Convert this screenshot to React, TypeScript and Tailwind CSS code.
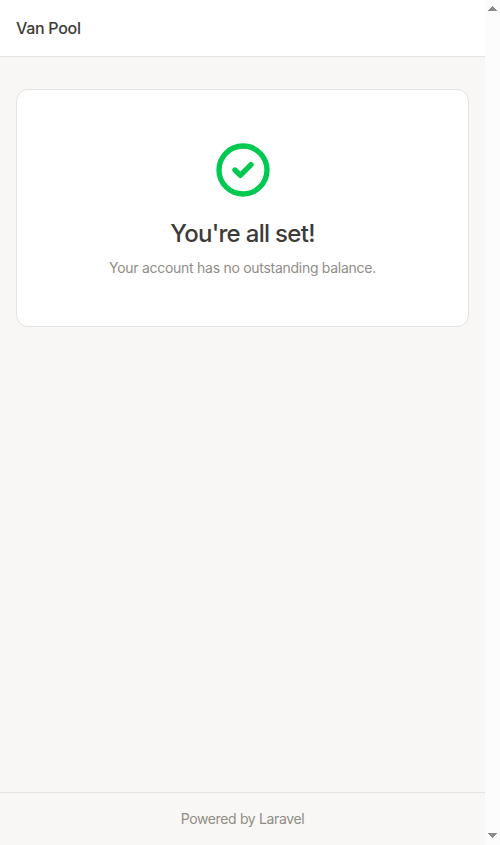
function CheckCircleIcon({ className }: { className?: string }) {
  return (
    <svg
      className={className}
      viewBox="0 0 24 24"
      fill="none"
      stroke="currentColor"
      strokeWidth={2}
      strokeLinecap="round"
      strokeLinejoin="round"
    >
      <path d="M9 12l2 2 4-4m6 2a9 9 0 11-18 0 9 9 0 0118 0z" />
    </svg>
  );
}

function Scrollbar() {
  return (
    <div className="flex w-[15px] shrink-0 flex-col items-center justify-between bg-[#fcfcfc] pt-[6px] pb-[7px]">
      <svg width="9" height="5" viewBox="0 0 9 5" fill="#8b8b8b" shapeRendering="crispEdges">
        <path d="M4 0h1v1h1v1h1v1h1v1h1v1H0V4h1V3h1V2h1V1h1z" />
      </svg>
      <svg width="9" height="5" viewBox="0 0 9 5" fill="#8b8b8b" shapeRendering="crispEdges">
        <path d="M0 0h9v1H8v1H7v1H6v1H5v1H4V4H3V3H2V2H1V1H0z" />
      </svg>
    </div>
  );
}

export default function App() {
  return (
    <div className="flex h-screen overflow-hidden font-['Inter','Liberation_Sans',sans-serif]">
      <div className="flex min-w-0 flex-1 flex-col bg-[#f8f7f5]">
        <header className="flex h-[57px] shrink-0 items-center border-b border-[#e5e3df] bg-white px-4">
          <span className="text-base font-medium tracking-[-0.018em] text-[#3d3b37]">Van Pool</span>
        </header>

        <main className="flex-1 px-4 py-8">
          <div className="flex h-[238px] flex-col items-center rounded-xl border border-[#e5e3df] bg-white pt-12 text-center">
            <CheckCircleIcon className="size-16 text-[#00c951]" />
            <h1 className="mt-4 text-2xl font-medium tracking-[-0.029em] text-[#3d3b37]">You're all set!</h1>
            <p className="mt-2 text-sm tracking-[-0.02em] text-[#908d86]">Your account has no outstanding balance.</p>
          </div>
        </main>

        <footer className="flex h-[53px] shrink-0 items-center justify-center border-t border-[#e5e3df]">
          <span className="text-sm tracking-[-0.025em] text-[#908d86]">Powered by Laravel</span>
        </footer>
      </div>
      <Scrollbar />
    </div>
  );
}
